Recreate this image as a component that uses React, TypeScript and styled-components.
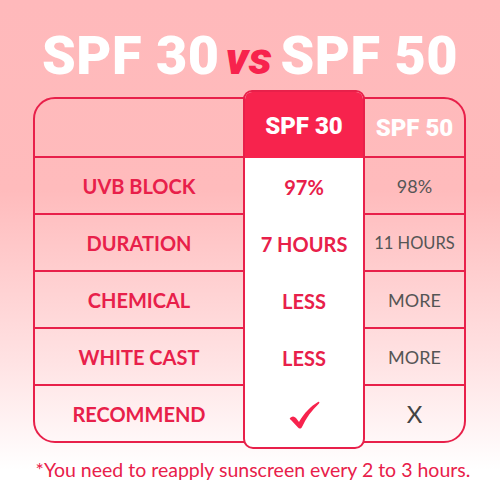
import { createGlobalStyle, styled } from "styled-components";

const GlobalStyle = createGlobalStyle`
  html, body {
    margin: 0;
    padding: 0;
  }
  body {
    font-family: "Lato", "Open Sans", sans-serif;
  }
`;

const RED = "#e8204a";
const HOT = "#f7234d";

const Page = styled.div`
  width: 500px;
  height: 500px;
  overflow: hidden;
  box-sizing: border-box;
  padding-top: 25px;
  background: linear-gradient(to bottom, #ffb9bb 0%, #ffbbbc 38%, #ffe2e3 72%, #ffffff 94%);
`;

const Title = styled.h1`
  margin: 0;
  text-align: center;
  font-family: "Roboto", sans-serif;
  font-weight: 900;
  font-size: 54px;
  line-height: 62px;
  color: #fff;
  letter-spacing: 0.5px;
`;

const Vs = styled.span`
  color: ${HOT};
  font-style: italic;
  font-size: 46px;
  margin: 0 8px 0 6px;
`;

const Table = styled.div`
  display: flex;
  margin: 8px 0 0 33px;
  width: 433px;
  box-sizing: border-box;
  border: 2px solid ${RED};
  border-radius: 22px;
`;

const Column = styled.div<{ $w: number }>`
  display: flex;
  flex-direction: column;
  width: ${(p) => p.$w}px;
`;

const Cell = styled.div<{ $head?: boolean; $tone?: "label" | "muted" }>`
  height: ${(p) => (p.$head ? 57 : 55)}px;
  display: flex;
  align-items: center;
  justify-content: center;
  border-bottom: 2px solid ${RED};
  font-size: ${(p) => (p.$tone === "muted" ? 18 : 20)}px;
  font-weight: ${(p) => (p.$tone === "muted" ? 400 : 700)};
  color: ${(p) => (p.$tone === "muted" ? "#555" : RED)};
  &:last-child {
    border-bottom: none;
  }
`;

const Small = styled.span`
  font-size: 16.5px;
`;

const HeadText = styled.span`
  font-family: "Roboto", sans-serif;
  font-weight: 900;
  font-size: 24px;
  color: #fff;
`;

const Highlight = styled.div`
  width: 122px;
  box-sizing: border-box;
  margin: -9px 0 -8px;
  display: flex;
  flex-direction: column;
  background: #fff;
  border: 2px solid ${RED};
  border-radius: 9px 9px 10px 10px;
  padding-bottom: 4px;
  overflow: hidden;
`;

const HighHead = styled.div`
  height: 64px;
  margin: -2px -2px 0;
  display: flex;
  align-items: center;
  justify-content: center;
  padding-top: 4px;
  background: ${HOT};
  border-radius: 8px 8px 0 0;
`;

const HighCell = styled.div`
  height: 57px;
  display: flex;
  align-items: center;
  justify-content: center;
  font-size: 20px;
  font-weight: 700;
  color: ${RED};
`;

const Cross = styled.span`
  font-size: 24px;
  font-weight: 400;
  color: #444;
`;

const Note = styled.p`
  margin: 15px 0 0;
  text-align: center;
  font-size: 19.5px;
  color: ${RED};
  padding-left: 6px;
`;

const rows = [
  { label: "UVB BLOCK", a: "97%", b: "98%" },
  { label: "DURATION", a: "7 HOURS", b: <Small>11 HOURS</Small> },
  { label: "CHEMICAL", a: "LESS", b: "MORE" },
  { label: "WHITE CAST", a: "LESS", b: "MORE" },
];

function Check() {
  return (
    <svg width="34" height="32" viewBox="0 0 34 30">
      <path
        d="M3 18 C5 16 7 16 9 18 L12 22 C17 13 24 6 31 2 C32 1.5 33 2.5 32 3.5 C25 10 19 18 15 27 C14 29 12 29 11 27.5 L4 20 C3 19.5 2.5 18.7 3 18 Z"
        fill={HOT}
      />
    </svg>
  );
}

export default function App() {
  return (
    <Page>
      <GlobalStyle />
      <Title>
        SPF 30<Vs>vs</Vs>SPF 50
      </Title>
      <Table>
        <Column $w={208}>
          <Cell $head />
          {rows.map((r) => (
            <Cell key={r.label}>{r.label}</Cell>
          ))}
          <Cell>RECOMMEND</Cell>
        </Column>
        <Highlight>
          <HighHead>
            <HeadText>SPF 30</HeadText>
          </HighHead>
          {rows.map((r) => (
            <HighCell key={r.label}>{r.a}</HighCell>
          ))}
          <HighCell>
            <Check />
          </HighCell>
        </Highlight>
        <Column $w={99}>
          <Cell $head>
            <HeadText>SPF 50</HeadText>
          </Cell>
          {rows.map((r) => (
            <Cell key={r.label} $tone="muted">
              {r.b}
            </Cell>
          ))}
          <Cell $tone="muted">
            <Cross>X</Cross>
          </Cell>
        </Column>
      </Table>
      <Note>*You need to reapply sunscreen every 2 to 3 hours.</Note>
    </Page>
  );
}
